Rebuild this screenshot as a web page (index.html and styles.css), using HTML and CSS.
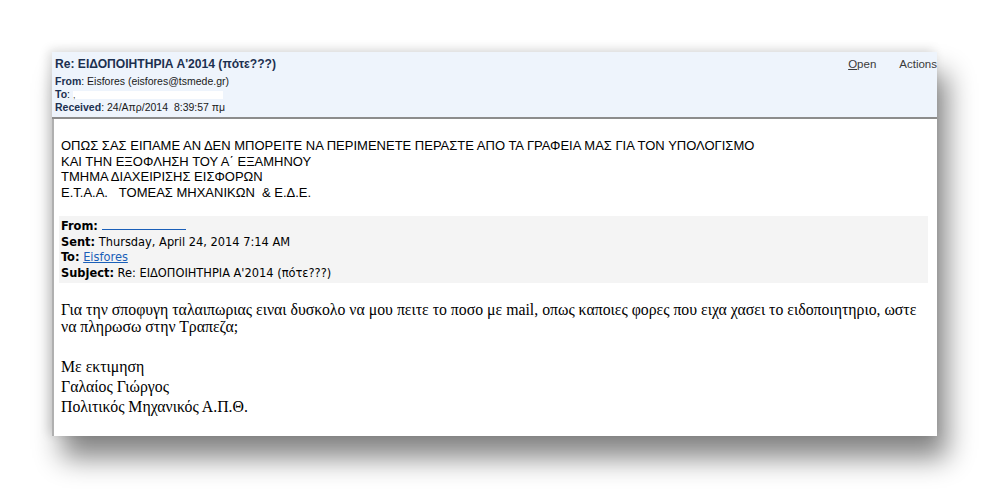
FILE: index.html
```html
<!DOCTYPE html>
<html lang="el">
<head>
<meta charset="utf-8">
<title>Re: ΕΙΔΟΠΟΙΗΤΗΡΙΑ Α'2014</title>
<link rel="stylesheet" href="styles.css">
</head>
<body>
<div class="card">
  <div class="head">
    <div class="head-row">
      <div class="subject">Re: ΕΙΔΟΠΟΙΗΤΗΡΙΑ Α'2014 (πότε???)</div>
      <div class="actions"><span class="act"><u>O</u>pen</span><span class="act">Actions</span></div>
    </div>
    <div class="meta"><b>From</b>: Eisfores (eisfores@tsmede.gr)</div>
    <div class="meta"><b>To</b>: <span class="redact">,</span></div>
    <div class="meta"><b>Received</b>: 24/Απρ/2014 &nbsp;8:39:57 πμ</div>
  </div>
  <div class="body">
    <div class="caps">
      <div>ΟΠΩΣ ΣΑΣ ΕΙΠΑΜΕ ΑΝ ΔΕΝ ΜΠΟΡΕΙΤΕ ΝΑ ΠΕΡΙΜΕΝΕΤΕ ΠΕΡΑΣΤΕ ΑΠΟ ΤΑ ΓΡΑΦΕΙΑ ΜΑΣ ΓΙΑ ΤΟΝ ΥΠΟΛΟΓΙΣΜΟ</div>
      <div>ΚΑΙ ΤΗΝ ΕΞΟΦΛΗΣΗ ΤΟΥ Α΄ ΕΞΑΜΗΝΟΥ</div>
      <div>ΤΜΗΜΑ ΔΙΑΧΕΙΡΙΣΗΣ ΕΙΣΦΟΡΩΝ</div>
      <div>Ε.Τ.Α.Α. &nbsp;&nbsp;ΤΟΜΕΑΣ ΜΗΧΑΝΙΚΩΝ &nbsp;&amp; Ε.Δ.Ε.</div>
    </div>
    <div class="quote">
      <div><b>From:</b> <span class="link-redact"></span></div>
      <div><b>Sent:</b> Thursday, April 24, 2014 7:14 AM</div>
      <div><b>To:</b> <a class="link">Eisfores</a></div>
      <div><b>Subject:</b> Re: ΕΙΔΟΠΟΙΗΤΗΡΙΑ Α'2014 (πότε???)</div>
    </div>
    <p class="para">Για την σποφυγη ταλαιπωριας ειναι δυσκολο να μου πειτε το ποσο με mail, οπως καποιες φορες που ειχα χασει το ειδοποιητηριο, ωστε να πληρωσω στην Τραπεζα;</p>
    <div class="sig">
      <div>Με εκτιμηση</div>
      <div>Γαλαίος Γιώργος</div>
      <div>Πολιτικός Μηχανικός Α.Π.Θ.</div>
    </div>
  </div>
</div>
</body>
</html>
```
FILE: styles.css
```css
html, body {
  margin: 0;
  padding: 0;
  background: #ffffff;
}
body {
  padding: 52px 0 0 52px;
  height: 489px;
  box-sizing: border-box;
  overflow: hidden;
}
.card {
  width: 885px;
  height: 384px;
  background: #ffffff;
  box-shadow: 10px 22px 26px rgba(0,0,0,0.48), -3px -2px 10px rgba(0,0,0,0.14);
  display: flex;
  flex-direction: column;
}
.head {
  background: #eef4fc;
  height: 67px;
  border-bottom: 2px solid #8c8c8c;
  padding: 4px 0 0 3px;
  box-sizing: border-box;
  font-family: "Liberation Sans", Arial, sans-serif;
  color: #1c2d45;
}
.head-row {
  display: flex;
  justify-content: space-between;
  align-items: baseline;
  margin-bottom: 3px;
}
.subject {
  font-weight: bold;
  font-size: 12.1px;
  line-height: 16px;
  color: #1c3050;
}
.actions {
  font-size: 11.5px;
  color: #3a3a3a;
  display: flex;
  gap: 23px;
  white-space: nowrap;
}
.meta {
  font-size: 10.5px;
  line-height: 13px;
  color: #1a1a1a;
}
.meta b {
  color: #1c3050;
}
.redact {
  display: inline-block;
  width: 150px;
  height: 8px;
  background: #ffffff;
  vertical-align: middle;
  color: #444;
  font-size: 9px;
  line-height: 8px;
}
.body {
  flex: 1;
  border-left: 2px solid #b0b0b0;
  padding: 19px 10px 0 5px;
}
.caps {
  font-family: "Liberation Sans", Arial, sans-serif;
  font-size: 13px;
  line-height: 15.6px;
  color: #000;
  padding-left: 2px;
}
.quote {
  margin-top: 16px;
  background: #f4f4f4;
  width: 869px;
  padding: 2px 0 3px 2px;
  box-sizing: border-box;
  font-family: "DejaVu Sans Condensed", "DejaVu Sans", sans-serif;
  font-size: 12.7px;
  line-height: 15.5px;
  color: #000;
}
.link {
  color: #1a5fb8;
  text-decoration: underline;
}
.link-redact {
  display: inline-block;
  width: 84px;
  height: 10px;
  border-bottom: 1px solid #1a5fb8;
  vertical-align: baseline;
}
.para {
  margin: 18px 0 0 2px;
  font-family: "Liberation Serif", "Times New Roman", serif;
  font-size: 15.8px;
  line-height: 17px;
  color: #000;
  width: 870px;
}
.sig {
  margin-top: 22px;
  margin-left: 2px;
  font-family: "Liberation Serif", "Times New Roman", serif;
  font-size: 15.8px;
  line-height: 20px;
  color: #000;
}
```
